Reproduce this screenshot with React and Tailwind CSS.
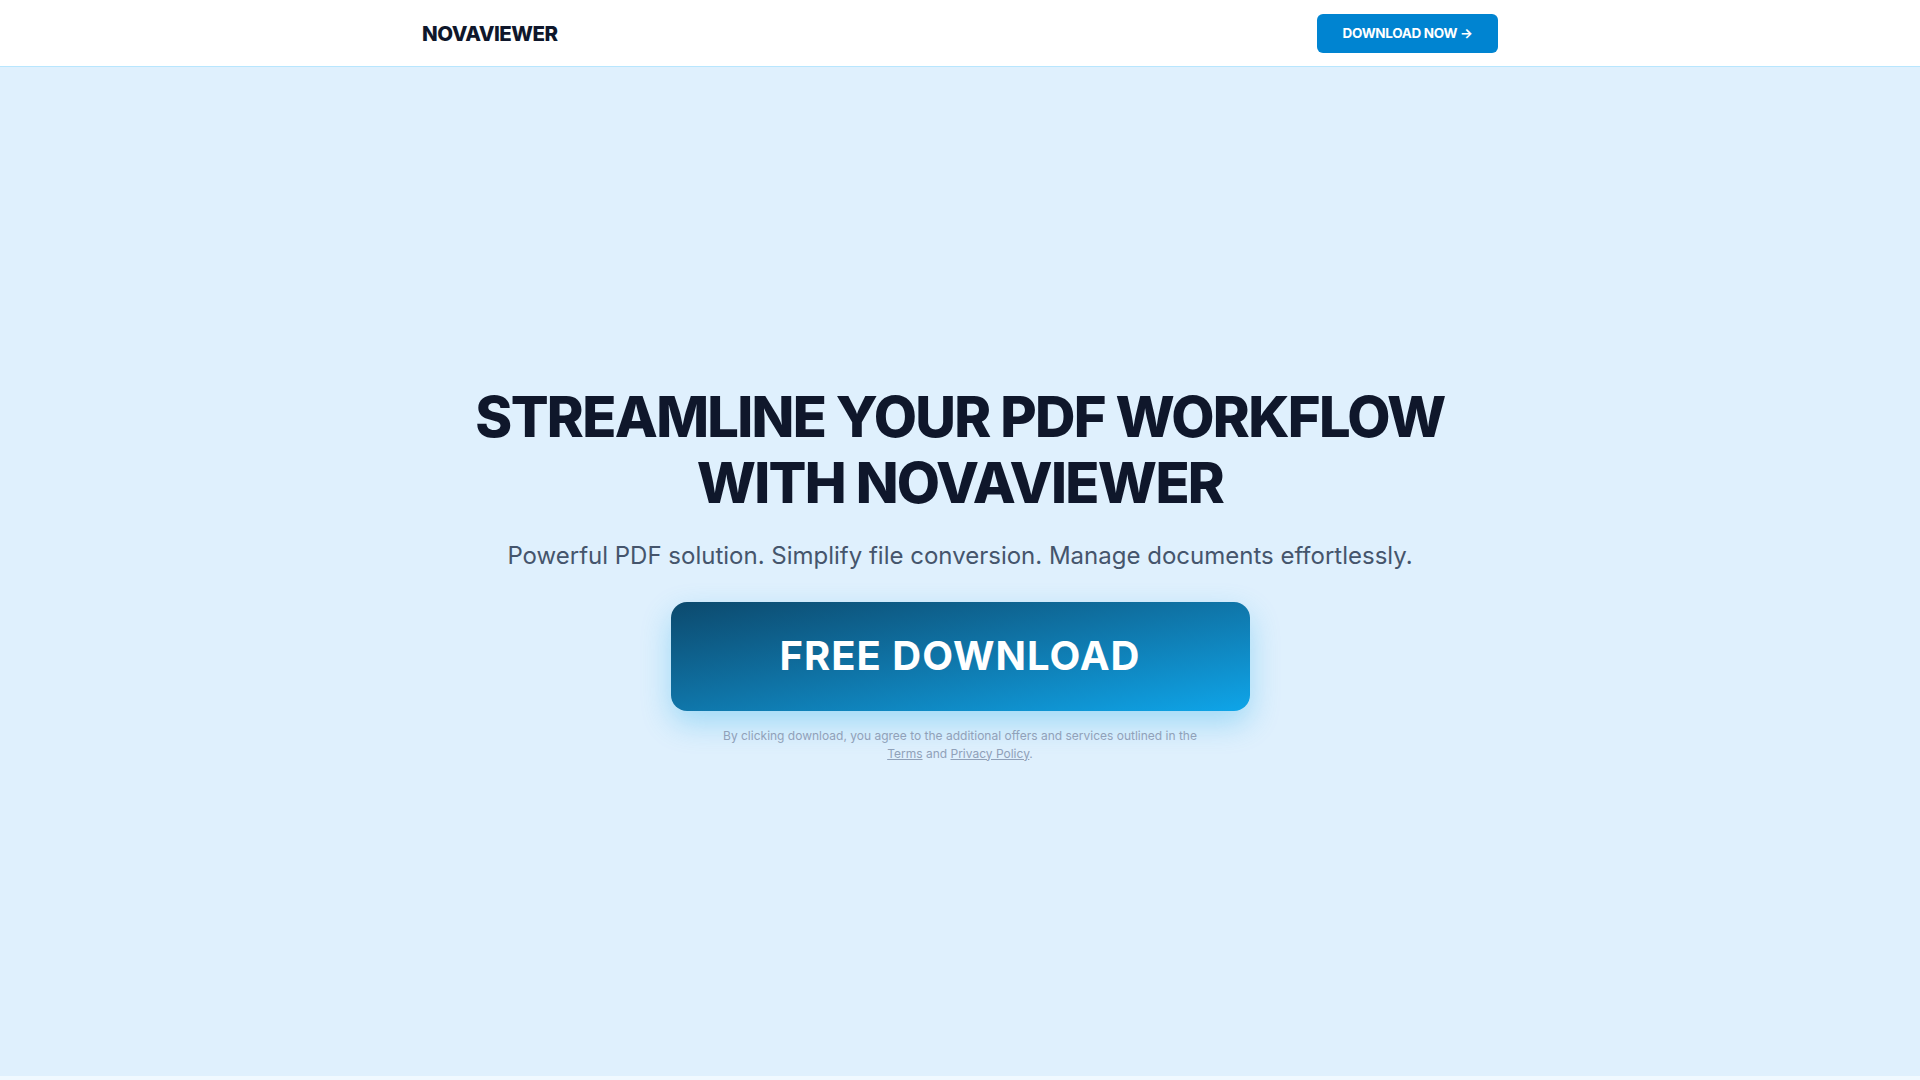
import React from 'react';

const App = () => {
  return (
    <div className="min-h-screen bg-sky-50" style={{ fontFamily: 'Inter, "Noto Sans", sans-serif' }}>
      {/* Header */}
      <header className="h-[67px] bg-white border-b border-sky-200">
        <div className="mx-auto w-[1076px] h-full flex items-center justify-between">
          <a href="#" className="mt-[2px] text-[20.5px] font-extrabold tracking-tight text-slate-900">
            NOVAVIEWER
          </a>
          <a
            href="#"
            className="h-[39px] w-[181px] flex items-center justify-center rounded-md bg-sky-600 text-white text-[13.5px] font-bold tracking-tight"
          >
            DOWNLOAD NOW →
          </a>
        </div>
      </header>

      {/* Hero */}
      <main className="h-[1009px] pt-[3px] bg-[#dff0fd] flex flex-col items-center justify-center text-center">
        <h1 className="whitespace-nowrap text-[56px] leading-[66px] font-extrabold tracking-[-0.03em] text-slate-900">
          STREAMLINE YOUR PDF WORKFLOW
          <br />
          WITH NOVAVIEWER
        </h1>
        <p className="mt-6 text-[24px] leading-8 text-slate-600">
          Powerful PDF solution. Simplify file conversion. Manage documents effortlessly.
        </p>
        <a
          href="#"
          className="mt-[30px] w-[579px] h-[109px] flex items-center justify-center rounded-2xl bg-gradient-to-br from-[#0c4a6e] to-[#0ea5e9] text-white text-[40px] font-bold tracking-wide shadow-[0_12px_30px_rgba(14,165,233,0.3)]"
        >
          FREE DOWNLOAD
        </a>
        <p className="mt-4 max-w-[480px] text-[12px] leading-[18px] text-slate-400">
          By clicking download, you agree to the additional offers and services outlined in the{' '}
          <a href="#" className="underline">Terms</a> and{' '}
          <a href="#" className="underline">Privacy Policy</a>.
        </p>
      </main>
    </div>
  );
};

export default App;
